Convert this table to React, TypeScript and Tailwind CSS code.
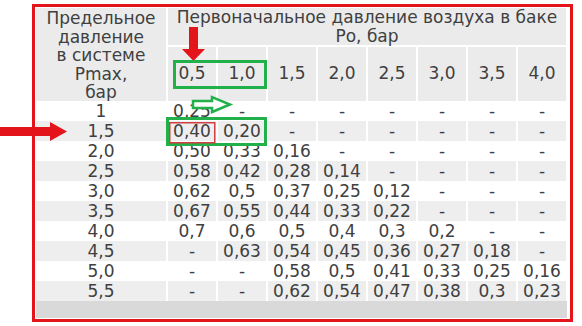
import React from "react";

const cols = ["0,5", "1,0", "1,5", "2,0", "2,5", "3,0", "3,5", "4,0"];
const rows: [string, string[]][] = [
  ["1", ["0,25", "-", "-", "-", "-", "-", "-", "-"]],
  ["1,5", ["0,40", "0,20", "-", "-", "-", "-", "-", "-"]],
  ["2,0", ["0,50", "0,33", "0,16", "-", "-", "-", "-", "-"]],
  ["2,5", ["0,58", "0,42", "0,28", "0,14", "-", "-", "-", "-"]],
  ["3,0", ["0,62", "0,5", "0,37", "0,25", "0,12", "-", "-", "-"]],
  ["3,5", ["0,67", "0,55", "0,44", "0,33", "0,22", "-", "-", "-"]],
  ["4,0", ["0,7", "0,6", "0,5", "0,4", "0,3", "0,2", "-", "-"]],
  ["4,5", ["-", "0,63", "0,54", "0,45", "0,36", "0,27", "0,18", "-"]],
  ["5,0", ["-", "-", "0,58", "0,5", "0,41", "0,33", "0,25", "0,16"]],
  ["5,5", ["-", "-", "0,62", "0,54", "0,47", "0,38", "0,3", "0,23"]],
];

export default function App() {
  return (
    <div className="relative w-[582px] h-[326px] bg-white overflow-hidden font-['DejaVu_Sans',sans-serif] text-[17px] text-[#404040]">
      <div className="ml-[32px] mt-[4px] w-[541px] h-[318px] border-[3px] border-[#e3141a] p-[1px] flex flex-col">
        <div className="grid grid-cols-[130px_repeat(8,48px)] grid-rows-[37px_54px] gap-[2px]">
          <div className="row-span-2 bg-[#ebebeb] text-center leading-[18.5px] pt-[1px] whitespace-nowrap">
            Предельное
            <br />
            давление
            <br />в системе
            <br />
            Pmax,
            <br />
            бар
          </div>
          <div className="col-span-8 bg-[#ebebeb] text-center leading-[19px] whitespace-nowrap">
            Первоначальное давление воздуха в баке
            <br />
            Ро, бар
          </div>
          {cols.map((c) => (
            <div key={c} className="bg-[#ebebeb] flex items-center justify-center">
              {c}
            </div>
          ))}
        </div>
        <div className="flex flex-col">
          {rows.map(([p, vals], i) => (
            <div key={p} className="grid grid-cols-[130px_repeat(8,48px)] gap-x-[2px] h-[20px] leading-[20px]">
              <div className={`text-center ${i % 2 === 1 ? "bg-[#eeeeee]" : "bg-white"}`}>{p}</div>
              {vals.map((v, j) => (
                <div key={j} className={`text-center whitespace-nowrap ${i % 2 === 1 ? "bg-[#eeeeee]" : "bg-white"}`}>
                  {v}
                </div>
              ))}
            </div>
          ))}
        </div>
        <div className="h-[17px] w-[531px] bg-[#d9d9d9]" />
      </div>
      <svg className="absolute inset-0 pointer-events-none" width="582" height="326" viewBox="0 0 582 326">
        <polygon points="0,127 50,127 50,122 67,131.5 50,141 50,136 0,136" fill="#e3141a" />
        <polygon points="189,27 198,27 198,49 205,49 193.5,61 182,49 189,49" fill="#e3141a" />
        <rect x="174.5" y="61.5" width="91" height="26" fill="none" stroke="#22b04a" strokeWidth="3" />
        <polygon points="193,101 212,101 212,97 230,104.5 212,112 212,108 193,108" fill="white" stroke="#22b04a" strokeWidth="2.5" strokeLinejoin="miter" />
        <rect x="167.5" y="118.5" width="98" height="26" fill="none" stroke="#22b04a" strokeWidth="3" />
        <rect x="169.75" y="122.75" width="45" height="20" fill="none" stroke="#d04040" strokeWidth="1.5" />
      </svg>
    </div>
  );
}
